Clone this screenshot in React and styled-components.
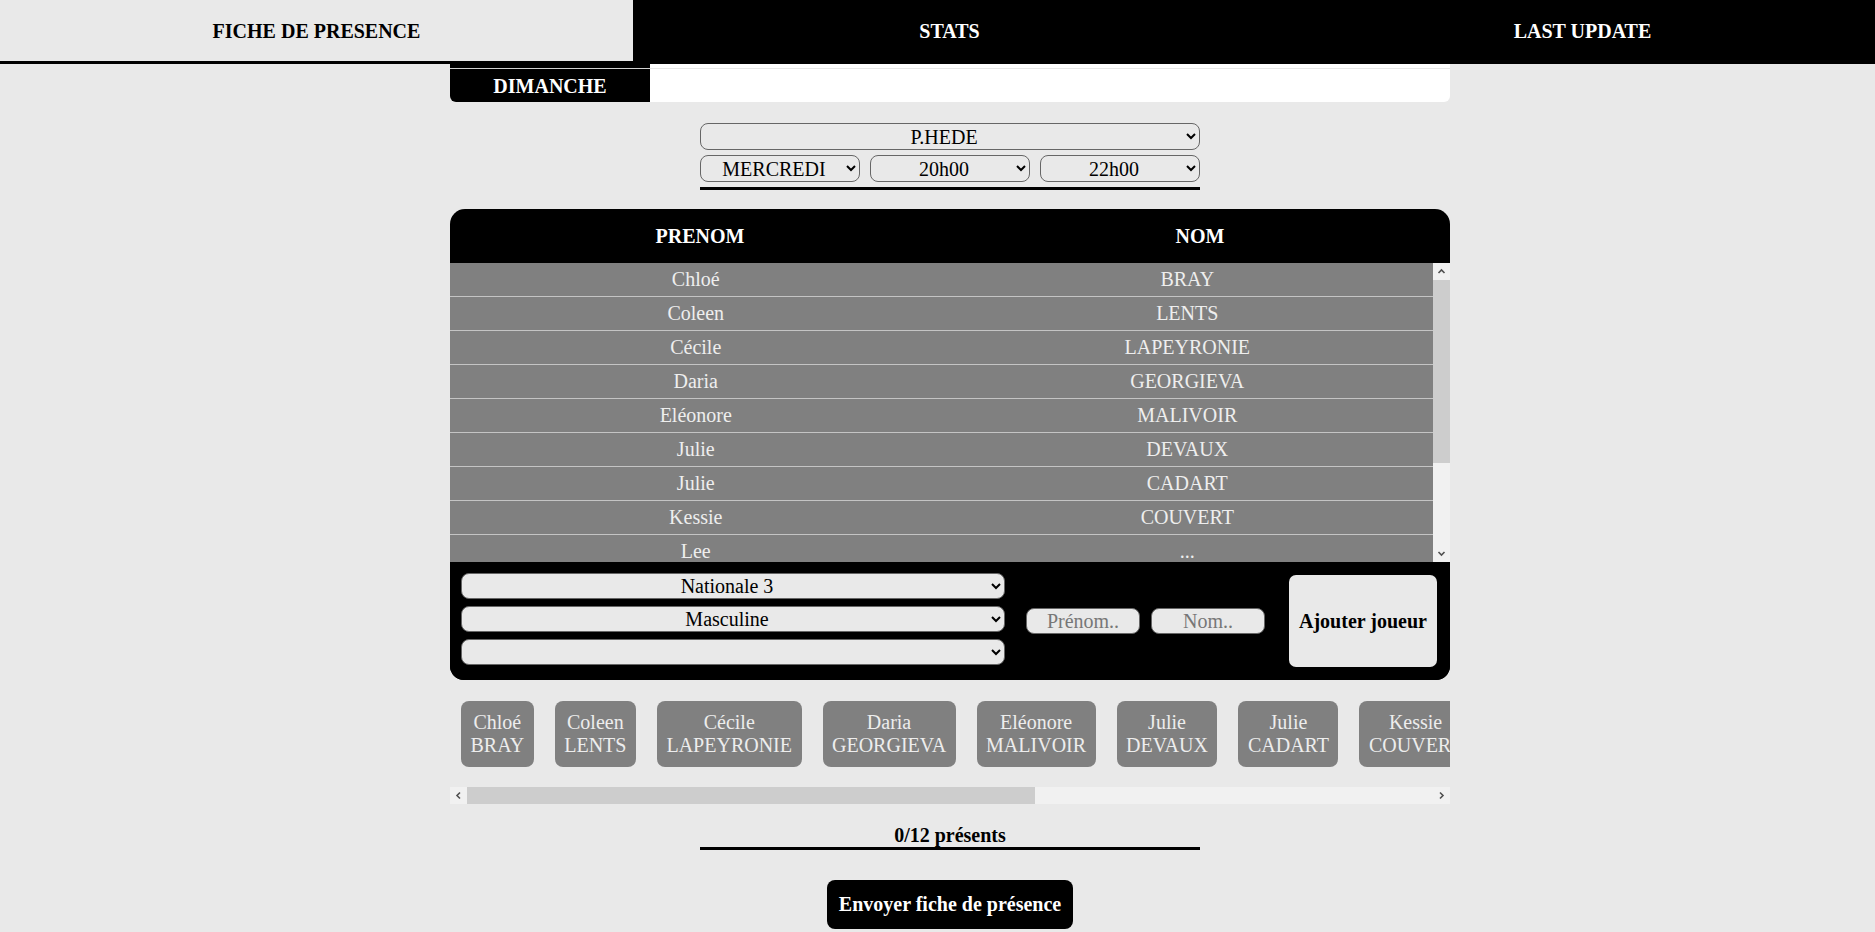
import React, { useState } from "react";
import styled, { createGlobalStyle } from "styled-components";

const players = [
  { prenom: "Chloé", nom: "BRAY" },
  { prenom: "Coleen", nom: "LENTS" },
  { prenom: "Cécile", nom: "LAPEYRONIE" },
  { prenom: "Daria", nom: "GEORGIEVA" },
  { prenom: "Eléonore", nom: "MALIVOIR" },
  { prenom: "Julie", nom: "DEVAUX" },
  { prenom: "Julie", nom: "CADART" },
  { prenom: "Kessie", nom: "COUVERT" },
  { prenom: "Lee", nom: "..." },
  { prenom: "Lisa", nom: "MARTIN" },
  { prenom: "Manon", nom: "PETIT" },
  { prenom: "Sarah", nom: "ROUX" },
];

const tabs = ["FICHE DE PRESENCE", "STATS", "LAST UPDATE"];

// chevrons des barres de défilement
const arrowPaths = {
  up: "M5.5 10 L8.5 7 L11.5 10",
  down: "M5.5 7 L8.5 10 L11.5 7",
  left: "M10 5.5 L7 8.5 L10 11.5",
  right: "M7 5.5 L10 8.5 L7 11.5",
};

const ScrollArrow = ({ dir }) => (
  <ArrowBox>
    <svg width="17" height="17" viewBox="0 0 17 17">
      <path d={arrowPaths[dir]} fill="none" stroke="#505050" strokeWidth="1.6" />
    </svg>
  </ArrowBox>
);

const GlobalStyle = createGlobalStyle`
  body {
    margin: 0;
    background: #e9e9e9;
    font-family: "Liberation Serif", "Times New Roman", serif;
    font-size: 20px;
  }
`;

const App = () => {
  const [activeTab, setActiveTab] = useState(0);

  return (
    <>
      <GlobalStyle />
      <TabBar>
        {tabs.map((t, i) => (
          <Tab key={t} $active={i === activeTab} onClick={() => setActiveTab(i)}>
            {t}
          </Tab>
        ))}
      </TabBar>

      <Main>
        <DayBar>
          <DayCell>DIMANCHE</DayCell>
        </DayBar>

        <Selectors>
          <Select defaultValue="P.HEDE">
            <option>P.HEDE</option>
          </Select>
          <SelectRow>
            <Select defaultValue="MERCREDI">
              <option>MERCREDI</option>
            </Select>
            <Select defaultValue="20h00">
              <option>20h00</option>
            </Select>
            <Select defaultValue="22h00">
              <option>22h00</option>
            </Select>
          </SelectRow>
        </Selectors>

        <Card>
          <HeadRow>
            <div>PRENOM</div>
            <div>NOM</div>
          </HeadRow>
          <BodyWrap>
            <Body>
              {players.map((p, i) => (
                <Row key={i}>
                  <div>{p.prenom}</div>
                  <div>{p.nom}</div>
                </Row>
              ))}
            </Body>
            <VRail>
              <ScrollArrow dir="up" />
              <VTrack>
                <Thumb style={{ height: "183px" }} />
              </VTrack>
              <ScrollArrow dir="down" />
            </VRail>
          </BodyWrap>
          <Footer>
            <FooterSelects>
              <Select $small defaultValue="Nationale 3">
                <option>Nationale 3</option>
              </Select>
              <Select $small defaultValue="Masculine">
                <option>Masculine</option>
              </Select>
              <Select $small defaultValue="">
                <option value=""></option>
              </Select>
            </FooterSelects>
            <InputGroup>
              <TextInput placeholder="Prénom.." />
              <TextInput placeholder="Nom.." />
            </InputGroup>
            <AddButton>Ajouter joueur</AddButton>
          </Footer>
        </Card>

        <ChipStrip>
          {players.map((p, i) => (
            <Chip key={i}>
              {p.prenom}
              <br />
              {p.nom}
            </Chip>
          ))}
        </ChipStrip>
        <HRail>
          <ScrollArrow dir="left" />
          <HTrack>
            <Thumb style={{ width: "568px" }} />
          </HTrack>
          <ScrollArrow dir="right" />
        </HRail>

        <Count>0/12 présents</Count>
        <SendButton>Envoyer fiche de présence</SendButton>
      </Main>
    </>
  );
};

export default App;

const TabBar = styled.nav`
  display: flex;
  overflow: hidden;
`;

const Tab = styled.button`
  flex: 0 0 633px;
  height: 64px;
  padding: 2px 0 0;
  border: none;
  border-bottom: 3px solid #000;
  background: ${(p) => (p.$active ? "#e9e9e9" : "#000")};
  color: ${(p) => (p.$active ? "#000" : "#fff")};
  font-family: inherit;
  font-size: 20px;
  font-weight: bold;
  cursor: pointer;
`;

const Main = styled.main`
  width: 1000px;
  margin-left: 24%;
`;

const DayBar = styled.div`
  position: relative;
  display: flex;
  height: 38px;
  background: #fff;
  border-radius: 0 0 6px 6px;

  &::before {
    content: "";
    position: absolute;
    left: 0;
    right: 0;
    top: 4px;
    height: 1px;
    background: rgba(228, 228, 228, 0.92);
  }
`;

const DayCell = styled.div`
  width: 200px;
  padding-top: 11px;
  box-sizing: border-box;
  background: #000;
  color: #fff;
  font-weight: bold;
  line-height: 23px;
  text-align: center;
  border-radius: 0 0 0 6px;
`;

const Selectors = styled.div`
  width: 500px;
  margin: 21px auto 0;
  display: flex;
  flex-direction: column;
  gap: 5px;
  padding-bottom: 5px;
  border-bottom: 3px solid #000;
`;

const SelectRow = styled.div`
  display: flex;
  gap: 10px;

  & > select {
    flex: 1;
    min-width: 0;
  }
`;

const Select = styled.select`
  box-sizing: border-box;
  width: 100%;
  height: ${(p) => (p.$small ? "26px" : "27px")};
  padding: 0 4px;
  font-family: inherit;
  font-size: 20px;
  color: #000;
  text-align: center;
  text-align-last: center;
  background: #e9e9e9;
  border: 1px solid #666;
  border-radius: 8px;
`;

const Card = styled.section`
  margin-top: 19px;
  border-radius: 15px 15px 14px 14px;
  overflow: hidden;
  background: #000;
`;

const HeadRow = styled.div`
  display: grid;
  grid-template-columns: 1fr 1fr;
  align-items: center;
  height: 54px;
  color: #fff;
  font-weight: bold;
  text-align: center;
`;

const BodyWrap = styled.div`
  display: flex;
  height: 299px;
`;

const Body = styled.div`
  flex: 1;
  overflow: hidden;
  background: #808080;
`;

const Row = styled.div`
  display: grid;
  grid-template-columns: 1fr 1fr;
  padding: 5px 0;
  line-height: 23px;
  color: #eeeeee;
  text-align: center;
  border-bottom: 1px solid #c4c4c4;
`;

const VRail = styled.div`
  display: flex;
  flex-direction: column;
  width: 17px;
  background: #f1f1f1;
`;

const VTrack = styled.div`
  flex: 1;
`;

const HRail = styled.div`
  display: flex;
  height: 17px;
  background: #f1f1f1;
`;

const HTrack = styled.div`
  flex: 1;
  display: flex;
`;

const Thumb = styled.div`
  background: #cdcdcd;
  height: 100%;
`;

const ArrowBox = styled.div`
  flex: 0 0 17px;
  width: 17px;
  height: 17px;

  svg {
    display: block;
  }
`;

const Footer = styled.div`
  display: flex;
  align-items: center;
  height: 118px;
  padding: 0 13px 0 11px;
  background: #000;
`;

const FooterSelects = styled.div`
  width: 544px;
  display: flex;
  flex-direction: column;
  gap: 7px;
  margin-top: -5px;
`;

const InputGroup = styled.div`
  display: flex;
  gap: 11px;
  margin-left: 21px;
`;

const TextInput = styled.input`
  width: 114px;
  height: 26px;
  box-sizing: border-box;
  padding: 0 4px;
  font-family: inherit;
  font-size: 20px;
  text-align: center;
  background: #e9e9e9;
  border: 1px solid #666;
  border-radius: 8px;

  &::placeholder {
    color: #777;
  }
`;

const AddButton = styled.button`
  margin-left: auto;
  width: 148px;
  height: 92px;
  padding: 0;
  border: none;
  border-radius: 7px;
  background: #e9e9e9;
  color: #000;
  font-family: inherit;
  font-size: 20px;
  font-weight: bold;
  cursor: pointer;
`;

const ChipStrip = styled.div`
  display: flex;
  gap: 21px;
  padding: 21px 11px 20px;
  overflow: hidden;
`;

const Chip = styled.button`
  flex-shrink: 0;
  height: 66px;
  padding: 0 9.5px;
  border: none;
  border-radius: 8px;
  background: #808080;
  color: #ededed;
  font-family: inherit;
  font-size: 20px;
  line-height: 23px;
  white-space: nowrap;
  cursor: pointer;
`;

const Count = styled.div`
  width: 500px;
  margin: 20px auto 0;
  padding-bottom: 0;
  line-height: 23px;
  text-align: center;
  font-weight: bold;
  border-bottom: 3px solid #000;
`;

const SendButton = styled.button`
  display: block;
  height: 49px;
  margin: 30px auto 0;
  padding: 0 12px;
  border: none;
  border-radius: 8px;
  background: #000;
  color: #fff;
  font-family: inherit;
  font-size: 20px;
  font-weight: bold;
  cursor: pointer;
`;
